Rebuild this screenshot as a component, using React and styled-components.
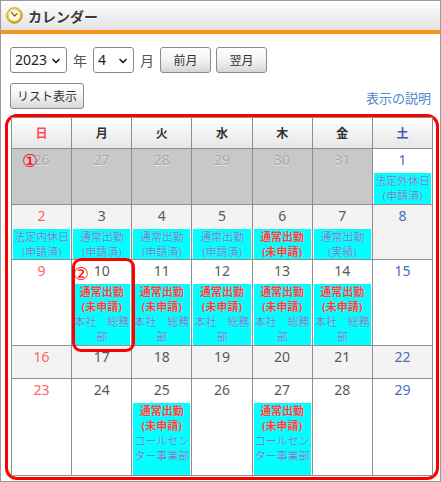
import React from 'react'
import styled, {createGlobalStyle} from 'styled-components'
import {ChevronDown} from 'lucide-react'

const GlobalStyle = createGlobalStyle`
  html, body {
    margin: 0;
    padding: 0;
    background: #fff;
  }
  body {
    font-family: "Noto Sans", "Noto Sans CJK JP", sans-serif;
  }
`

const weekdays = ['日', '月', '火', '水', '木', '金', '土']

const done = (title, status) => ({title, status, pending: false})
const pending = (dept) => ({title: '通常出勤', status: '(未申請)', pending: true, dept})

const weeks = [
    [
        {d: 26, prev: true}, {d: 27, prev: true}, {d: 28, prev: true}, {d: 29, prev: true},
        {d: 30, prev: true}, {d: 31, prev: true}, {d: 1, tag: done('法定外休日', '(申請済)')},
    ],
    [
        {d: 2, tag: done('法定内休日', '(申請済)')},
        {d: 3, tag: done('通常出勤', '(申請済)')},
        {d: 4, tag: done('通常出勤', '(申請済)')},
        {d: 5, tag: done('通常出勤', '(申請済)')},
        {d: 6, tag: {title: '通常出勤', status: '(未申請)', pending: true}},
        {d: 7, tag: done('通常出勤', '(実績)')},
        {d: 8},
    ],
    [
        {d: 9},
        {d: 10, tag: pending('本社　総務部')},
        {d: 11, tag: pending('本社　総務部')},
        {d: 12, tag: pending('本社　総務部')},
        {d: 13, tag: pending('本社　総務部')},
        {d: 14, tag: pending('本社　総務部')},
        {d: 15},
    ],
    [{d: 16}, {d: 17}, {d: 18}, {d: 19}, {d: 20}, {d: 21}, {d: 22}],
    [
        {d: 23}, {d: 24},
        {d: 25, tag: pending('コールセンター事業部')},
        {d: 26},
        {d: 27, tag: pending('コールセンター事業部')},
        {d: 28}, {d: 29},
    ],
]

function ClockIcon() {
    return (
        <svg width="17" height="17" viewBox="0 0 17 17">
            <defs>
                <radialGradient id="clk" cx="40%" cy="35%" r="70%">
                    <stop offset="0%" stopColor="#fff6c8" />
                    <stop offset="60%" stopColor="#f3cf4a" />
                    <stop offset="100%" stopColor="#c99712" />
                </radialGradient>
            </defs>
            <circle cx="8.5" cy="8.5" r="7.8" fill="url(#clk)" stroke="#b88a10" strokeWidth="0.8" />
            <circle cx="8.5" cy="8.5" r="5.4" fill="#fffbe8" />
            <path d="M8.5 9 L5.6 5.4 M8.5 9 L11 6.6" stroke="#6b5a2a" strokeWidth="1.2" strokeLinecap="round" />
        </svg>
    )
}

function Select({value, options, width}) {
    return (
        <SelectWrap width={width}>
            <NativeSelect defaultValue={value}>
                {options.map(o => <option key={o}>{o}</option>)}
            </NativeSelect>
            <Chevron size={12} strokeWidth={3.4} />
        </SelectWrap>
    )
}

function DayCell({day, col, row}) {
    const tone = day.prev ? 'prev' : col === 0 ? 'sun' : col === 6 ? 'sat' : 'normal'
    return (
        <Cell prev={day.prev} shade={row % 2 === 1}>
            <DayNum tone={tone}>{day.d}</DayNum>
            {day.tag && (
                <Tag>
                    <TagLine pending={day.tag.pending}>{day.tag.title}</TagLine>
                    <TagLine pending={day.tag.pending}>{day.tag.status}</TagLine>
                    {day.tag.dept && <TagLine>{day.tag.dept}</TagLine>}
                </Tag>
            )}
        </Cell>
    )
}

export default function App() {
    return (
        <Frame>
            <GlobalStyle />
            <TitleBar>
                <ClockIcon />
                <Title>カレンダー</Title>
            </TitleBar>
            <Body>
                <Controls>
                    <Select value="2023" options={['2022', '2023', '2024']} width={57} />
                    <Unit>年</Unit>
                    <Select value="4" options={['1', '2', '3', '4', '5', '6', '7', '8', '9', '10', '11', '12']} width={41} />
                    <Unit>月</Unit>
                    <Button>前月</Button>
                    <Button>翌月</Button>
                </Controls>
                <SubRow>
                    <Button wide>リスト表示</Button>
                    <HelpLink href="#">表示の説明</HelpLink>
                </SubRow>
                <Highlight>
                    <Grid>
                        {weekdays.map((w, i) => (
                            <HeadCell key={w} tone={i === 0 ? 'sun' : i === 6 ? 'sat' : 'normal'}>{w}</HeadCell>
                        ))}
                        {weeks.map((week, r) =>
                            week.map((day, c) => <DayCell key={r + '-' + c} day={day} col={c} row={r} />)
                        )}
                    </Grid>
                </Highlight>
            </Body>
            <Marker style={{left: 21, top: 151}}>①</Marker>
            <FocusBox />
            <Marker style={{left: 72, top: 264}}>②</Marker>
        </Frame>
    )
}

const Frame = styled.div`
    position: relative;
    width: 441px;
    height: 482px;
    box-sizing: border-box;
    border: 1px solid #9a9a9a;
    overflow: hidden;
    background: #fff;
`

const TitleBar = styled.div`
    height: 29px;
    display: flex;
    align-items: center;
    gap: 5px;
    padding-left: 5px;
    background: linear-gradient(#ffffff, #e2e2e2);
    border-bottom: 4px solid #f7941e;
`

const Title = styled.span`
    font-size: 14px;
    font-weight: 700;
    color: #3a3a3a;
    text-shadow: 0 1px 0 #fff;
`

const Body = styled.div`
    padding: 12px 0 0 3px;
`

const Controls = styled.div`
    display: flex;
    align-items: center;
    gap: 5px;
    padding-left: 6px;
    height: 27px;
`

const SelectWrap = styled.div`
    position: relative;
    width: ${p => p.width}px;
    height: 26px;
    box-sizing: border-box;
    border: 1px solid #8a8a8a;
    border-radius: 3px;
    background: #fff;
`

const NativeSelect = styled.select`
    appearance: none;
    width: 100%;
    height: 100%;
    border: none;
    background: transparent;
    padding: 0 0 0 4px;
    font-family: "Noto Sans", "Noto Sans CJK JP", sans-serif;
    font-size: 14px;
    color: #222;
    outline: none;
`

const Chevron = styled(ChevronDown)`
    position: absolute;
    right: 4px;
    top: 7px;
    color: #222;
    pointer-events: none;
`

const Unit = styled.span`
    font-size: 14px;
    color: #555;
    margin: 0 1px;
`

const Button = styled.button`
    height: 26px;
    min-width: ${p => (p.wide ? 71 : 51)}px;
    padding: 0 6px;
    box-sizing: border-box;
    border: 1px solid #8c8c8c;
    border-radius: 3px;
    background: linear-gradient(#ffffff 0%, #f3f3f3 50%, #d6d6d6 100%);
    font-family: "Noto Sans", "Noto Sans CJK JP", sans-serif;
    font-size: 12px;
    color: #333;
`

const SubRow = styled.div`
    display: flex;
    align-items: center;
    justify-content: space-between;
    padding: 0 9px 0 6px;
    margin-top: 10px;
    height: 26px;
`

const HelpLink = styled.a`
    font-size: 13px;
    color: #4a86c8;
    text-decoration: none;
    margin-top: 2px;
`

const Highlight = styled.div`
    margin-top: 5px;
    width: 434px;
    height: 366px;
    box-sizing: border-box;
    border: 3px solid #ff0000;
    border-radius: 12px;
    padding: 0 0 0 3px;
    margin-left: 1px;
`

const Grid = styled.div`
    display: grid;
    grid-template-columns: repeat(7, 1fr);
    grid-template-rows: 30px 55px 54px 85px 32px 96px;
    gap: 1px;
    padding: 1px;
    width: 422px;
    box-sizing: border-box;
    background: #8f8f8f;
`

const toneColor = {
    sun: '#ff4d4d',
    sat: '#3c5bb0',
    normal: '#333',
    prev: '#a6a6a6',
}

const HeadCell = styled.div`
    display: flex;
    align-items: center;
    justify-content: center;
    background: linear-gradient(#ffffff, #e6e6e6);
    font-size: 12px;
    font-weight: 700;
    color: ${p => toneColor[p.tone]};
`

const Cell = styled.div`
    display: flex;
    flex-direction: column;
    min-width: 0;
    background: ${p => (p.prev ? '#c8c8c8' : p.shade ? '#f3f3f3' : '#fff')};
`

const DayNum = styled.div`
    height: 24px;
    line-height: 22px;
    text-align: center;
    font-size: 14px;
    color: ${p => (p.tone === 'normal' ? '#5a5a5a' : p.tone === 'sun' ? '#ff6464' : p.tone === 'sat' ? '#4a6cc0' : '#a8a8a8')};
    text-shadow: ${p => (p.tone === 'prev' ? '0 1px 0 #e8e8e8' : 'none')};
`

const Tag = styled.div`
    flex: 1;
    margin: 0 1px;
    background: #00ffff;
    text-align: center;
`

const TagLine = styled.div`
    font-size: 11px;
    line-height: 15px;
    font-weight: ${p => (p.pending ? 700 : 400)};
    color: ${p => (p.pending ? '#ff3b3b' : '#5d87cc')};
    text-shadow: 0 0 1px rgba(255, 255, 255, 0.6);
`

const Marker = styled.span`
    position: absolute;
    font-size: 18px;
    line-height: 18px;
    color: #ff0000;
    font-family: "DejaVu Sans", "Noto Sans CJK JP", sans-serif;
`

const FocusBox = styled.div`
    position: absolute;
    left: 71px;
    top: 257px;
    width: 63px;
    height: 94px;
    box-sizing: border-box;
    border: 3px solid #ff0000;
    border-radius: 9px;
`
